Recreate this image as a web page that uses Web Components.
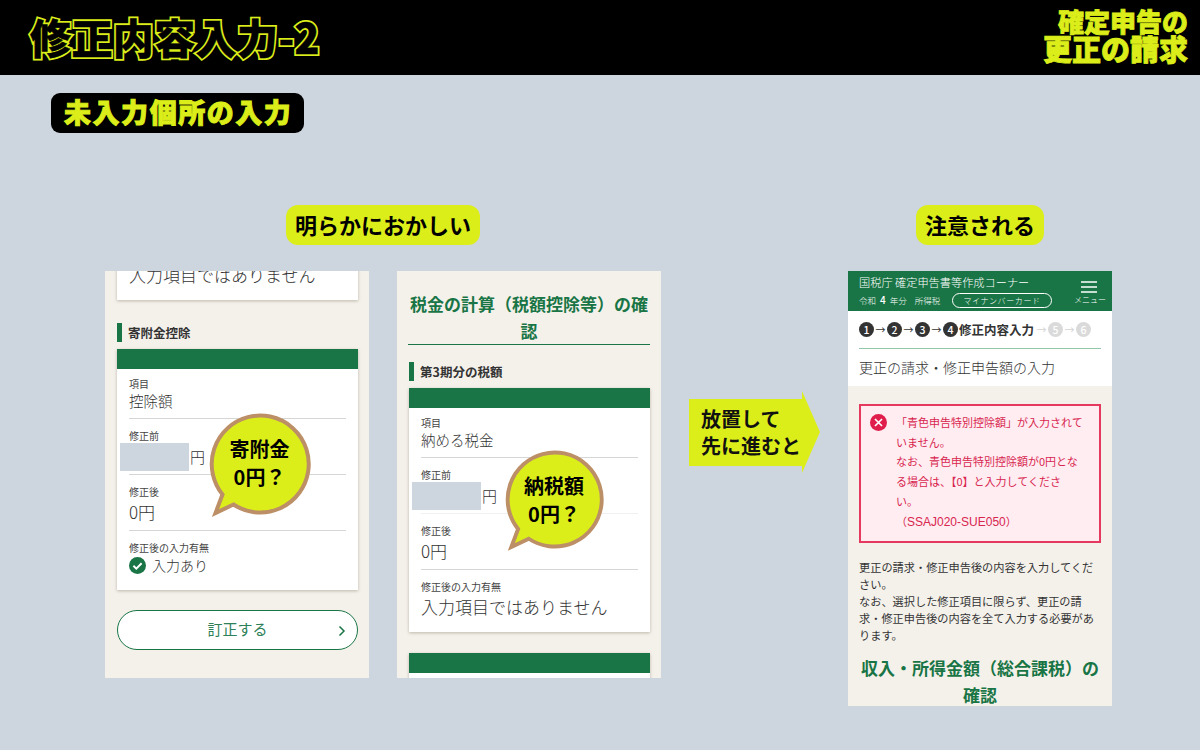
<!DOCTYPE html>
<html lang="ja">
<head>
<meta charset="utf-8">
<title>修正内容入力-2</title>
<style>
html, body { margin: 0; height: 750px; overflow: hidden; background: #cdd5df; font-family: "Noto Sans CJK JP", "Noto Sans", sans-serif; }
</style>
</head>
<body>
<slide-header></slide-header>
<slide-tag>未入力個所の入力</slide-tag>
<slide-main>
  <slide-group label="明らかにおかしい">
    <phone-frame>
      <form-card class="top" style="margin-top:-19px">
        <card-row nohead soft>入力項目ではありません</card-row>
      </form-card>
      <sec-head style="margin-top:23px">寄附金控除</sec-head>
      <form-card>
        <card-row first label="項目">控除額</card-row>
        <card-row label="修正前"><masked-value></masked-value></card-row>
        <card-row label="修正後" big>0円</card-row>
        <card-row label="修正後の入力有無" tail><check-value>入力あり</check-value></card-row>
      </form-card>
      <fix-button>訂正する</fix-button>
      <speech-bubble slot="over" style="left:104px;top:142px">寄附金<br>0円？</speech-bubble>
    </phone-frame>
    <phone-frame>
      <page-title underline>税金の計算（税額控除等）の確<br>認</page-title>
      <sec-head style="margin-top:17px">第3期分の税額</sec-head>
      <form-card>
        <card-row first label="項目">納める税金</card-row>
        <card-row label="修正前" soft><masked-value></masked-value></card-row>
        <card-row label="修正後" big>0円</card-row>
        <card-row label="修正後の入力有無" soft big last>入力項目ではありません</card-row>
      </form-card>
      <form-card style="margin-top:21px;height:60px"></form-card>
      <speech-bubble slot="over" small style="left:108px;top:179px">納税額<br>0円？</speech-bubble>
    </phone-frame>
  </slide-group>
  <next-arrow>放置して<br>先に進むと</next-arrow>
  <slide-group label="注意される">
    <phone-frame tall>
      <tax-appbar></tax-appbar>
      <step-head></step-head>
      <error-box>「青色申告特別控除額」が入力されて<br>いません。<br>なお、青色申告特別控除額が0円とな<br>る場合は、【0】と入力してくださ<br>い。<br>（<span style="font-family:'Liberation Sans',sans-serif;font-size:12px">SSAJ020-SUE050</span>）</error-box>
      <lead-text>更正の請求・修正申告後の内容を入力してくだ<br>さい。<br>なお、選択した修正項目に限らず、更正の請<br>求・修正申告後の内容を全て入力する必要があ<br>ります。</lead-text>
      <page-title>収入・所得金額（総合課税）の<br>確認</page-title>
    </phone-frame>
  </slide-group>
</slide-main>

<script>
class Part extends HTMLElement {
    connectedCallback() {
        if (!this.shadowRoot) {
            this.attachShadow({ mode: 'open' }).innerHTML = this.render();
        }
    }
}

const LIME = '#dcee1a';
const GREEN = '#197545';

class SlideHeader extends Part {
    render() {
        return `
            <style>
                :host { display: flex; justify-content: space-between; align-items: center; height: 75px; background: #000; padding: 0 12px 0 30px; box-sizing: border-box; }
                .title { position: relative; font-size: 41px; font-weight: 900; line-height: 1; color: ${LIME}; -webkit-text-stroke: 4px ${LIME}; margin-top: -2px; white-space: nowrap; letter-spacing: .4px; }
                .title::after { content: attr(data-text); position: absolute; left: 0; top: 0; color: #000; -webkit-text-stroke: .5px #000; }
                .logo { color: ${LIME}; font-weight: 900; text-align: right; -webkit-text-stroke: .8px ${LIME}; margin-top: -7px; }
                .logo div:first-child { font-size: 26px; line-height: 28px; }
                .logo div:last-child { font-size: 29px; line-height: 27px; }
            </style>
            <div class="title" data-text="修正内容入力-2">修正内容入力-2</div>
            <div class="logo"><div>確定申告の</div><div>更正の請求</div></div>
        `;
    }
}

class SlideTag extends Part {
    render() {
        return `
            <style>
                :host { display: block; width: fit-content; margin: 18px 0 0 51px; height: 40px; line-height: 38px; padding: 0 12px 0 13px; box-sizing: border-box; background: #000; border-radius: 9px; color: ${LIME}; font-size: 27px; font-weight: 900; letter-spacing: 1.55px; -webkit-text-stroke: .9px ${LIME}; white-space: nowrap; }
            </style>
            <slot></slot>
        `;
    }
}

class SlideMain extends Part {
    render() {
        return `
            <style>
                :host { display: flex; align-items: flex-start; gap: 28px; margin: 72px 0 0 105px; }
            </style>
            <slot></slot>
        `;
    }
}

class SlideGroup extends Part {
    render() {
        return `
            <style>
                :host { display: flex; flex-direction: column; align-items: center; gap: 26px; }
                .pill { height: 40px; line-height: 39px; padding: 0 9px; background: ${LIME}; border-radius: 12px; font-size: 22px; font-weight: 700; color: #000; white-space: nowrap; }
                .row { display: flex; gap: 28px; }
            </style>
            <div class="pill">${this.getAttribute('label')}</div>
            <div class="row"><slot></slot></div>
        `;
    }
}

class PhoneFrame extends Part {
    render() {
        const height = this.hasAttribute('tall') ? 435 : 407;
        return `
            <style>
                :host { display: block; position: relative; width: 264px; height: ${height}px; background: #f4f1eb; overflow: hidden; color: #333; }
            </style>
            <slot></slot>
            <slot name="over"></slot>
        `;
    }
}

class FormCard extends Part {
    render() {
        return `
            <style>
                :host { display: block; margin: 0 11px 0 12px; background: #fff; box-shadow: 0 1px 3px rgba(90,80,50,.35); }
                .bar { height: 20px; background: ${GREEN}; }
                .body { padding: 0 12.500px 0 12px; }
                :host(.top) .bar { display: none; }
            </style>
            <div class="bar"></div>
            <div class="body"><slot></slot></div>
        `;
    }
}

class CardRow extends Part {
    render() {
        const first = this.hasAttribute('first');
        const line = this.hasAttribute('soft') ? '#f0f0f0' : '#d6d6d6';
        const label = this.getAttribute('label');
        let bottom = 5;
        if (first) bottom = 7;
        if (this.hasAttribute('nohead') || this.hasAttribute('last')) bottom = 12;
        if (this.hasAttribute('tail')) bottom = 15;
        return `
            <style>
                :host { display: block; padding: ${first ? 8 : 10}px 0 ${bottom}px; font-weight: 300; }
                :host(:not(:last-child)) { border-bottom: 1px solid ${line}; }
                .label { font-size: 10px; line-height: 14px; color: #444; font-weight: 400; }
                .value { font-size: ${this.hasAttribute('big') ? 17 : 14.5}px; line-height: ${first ? 20 : 26}px; white-space: nowrap; }
                :host([nohead]) .value { font-size: 17px; line-height: 26px; }
            </style>
            ${label ? `<div class="label">${label}</div>` : ''}
            <div class="value"><slot></slot></div>
        `;
    }
}

class MaskedValue extends Part {
    render() {
        return `
            <style>
                :host { display: flex; align-items: center; margin: 0 0 -2px -9px; height: 28px; font-size: 15px; }
                i { width: 69px; height: 28px; background: #cdd5df; margin-right: 1px; }
            </style>
            <i></i>円
        `;
    }
}

class CheckValue extends Part {
    render() {
        return `
            <style>
                :host { display: flex; align-items: center; gap: 6px; height: 20px; font-size: 14px; }
                svg { width: 17px; height: 17px; }
            </style>
            <svg viewBox="0 0 17 17"><circle cx="8.5" cy="8.5" r="8.5" fill="${GREEN}"/><path d="M4.4 8.8l2.9 2.8 5.3-5.4" fill="none" stroke="#fff" stroke-width="2"/></svg>
            <slot></slot>
        `;
    }
}

class SecHead extends Part {
    render() {
        return `
            <style>
                :host { display: block; margin: 0 11px 7px 12px; height: 19px; border-left: 5px solid ${GREEN}; padding-left: 6px; font-size: 12.5px; font-weight: 700; line-height: 19px; color: #333; }
            </style>
            <slot></slot>
        `;
    }
}

class FixButton extends Part {
    render() {
        return `
            <style>
                :host { display: flex; position: relative; justify-content: center; align-items: center; box-sizing: border-box; margin: 20px 11px 0 12px; height: 40px; padding-bottom: 3px; background: #fff; border: 1.5px solid ${GREEN}; border-radius: 20px; font-size: 15px; color: #2d8058; font-weight: 400; }
                svg { position: absolute; right: 11px; top: 14px; width: 8px; height: 12px; }
            </style>
            <slot></slot>
            <svg viewBox="0 0 8 12"><path d="M1.5 1.5L6 6l-4.500 4.500" fill="none" stroke="${GREEN}" stroke-width="1.500"/></svg>
        `;
    }
}

class PageTitle extends Part {
    render() {
        return `
            <style>
                :host { display: block; margin: 0 11px; padding: 20px 0 0; text-align: center; font-size: 17px; font-weight: 700; line-height: 27px; color: ${GREEN}; white-space: nowrap; }
                :host([underline]) { border-bottom: 1px solid ${GREEN}; padding: 19px 0 0; height: 54px; }
                :host(:last-child) { padding-top: 10px; }
            </style>
            <slot></slot>
        `;
    }
}

class SpeechBubble extends Part {
    render() {
        const scale = this.hasAttribute('small') ? .97 : 1;
        return `
            <style>
                :host { position: absolute; display: block; width: ${104 * scale}px; height: ${108 * scale}px; }
                svg { position: absolute; inset: 0; width: 100%; height: 100%; }
                .t { position: absolute; left: 0; top: 22px; width: ${101 * scale}px; text-align: center; font-size: 20px; font-weight: 700; line-height: 28px; color: #000; }
            </style>
            <svg viewBox="0 0 104 108"><path d="M13.5 81.5A48.500 48.500 0 1 1 24.500 91.500L6.500 100Z" fill="${LIME}" stroke="#bc8f67" stroke-width="4"/></svg>
            <div class="t"><slot></slot></div>
        `;
    }
}

class NextArrow extends Part {
    render() {
        return `
            <style>
                :host { display: block; box-sizing: border-box; width: 131px; height: 82px; margin-top: 186px; padding: 14px 0 0 12px; background: ${LIME}; clip-path: polygon(0 8px, 113px 8px, 113px 0, 131px 41px, 113px 82px, 113px 75px, 0 75px); font-size: 20px; font-weight: 700; line-height: 27px; color: #111; white-space: nowrap; }
            </style>
            <slot></slot>
        `;
    }
}

class TaxAppbar extends Part {
    render() {
        return `
            <style>
                :host { display: block; position: relative; height: 40px; background: ${GREEN}; color: #fff; font-weight: 300; }
                .name { position: absolute; left: 11px; top: 3px; font-size: 11.2px; line-height: 16px; white-space: nowrap; }
                .sub { position: absolute; left: 11px; top: 23px; font-size: 8.5px; line-height: 12px; white-space: nowrap; }
                .sub b { font-size: 10px; font-weight: 500; margin: 0 4px; }
                .sub span { margin-left: 8px; }
                .card { position: absolute; left: 104px; top: 22px; width: 100px; height: 15px; box-sizing: border-box; border: 1px solid #fff; border-radius: 8px; font-size: 8px; line-height: 13px; text-align: center; letter-spacing: .6px; }
                svg { position: absolute; left: 233px; top: 10px; width: 16px; height: 12px; }
                .menu { position: absolute; left: 226px; top: 23px; font-size: 8px; line-height: 12px; white-space: nowrap; }
            </style>
            <div class="name">国税庁 確定申告書等作成コーナー</div>
            <div class="sub">令和<b>4</b>年分<span>所得税</span></div>
            <div class="card">マイナンバーカード</div>
            <svg viewBox="0 0 16 12"><path d="M0 1h16M0 6h16M0 11h16" stroke="#fff" stroke-width="1.500"/></svg>
            <div class="menu">メニュー</div>
        `;
    }
}

class StepHead extends Part {
    render() {
        const dot = (n, off) => `<i class="${off ? 'off' : ''}">${n}</i>`;
        const arrow = (off) => `<u class="${off ? 'off' : ''}">→</u>`;
        return `
            <style>
                :host { display: block; background: #fff; height: 75px; padding: 0 11px; }
                .steps { display: flex; align-items: center; height: 37px; font-size: 12.5px; font-weight: 700; color: #333; white-space: nowrap; border-bottom: 1.500px solid #8fc7a8; }
                i { display: block; width: 15px; height: 15px; border-radius: 50%; background: #333; color: #fff; font-size: 10.5px; font-style: normal; line-height: 15px; text-align: center; font-weight: 500; }
                i.off { background: #dadada; }
                u { text-decoration: none; width: 13px; text-align: center; font-size: 10px; font-weight: 400; }
                u.off { color: #d4d4d4; }
                .now { margin: 0 1px; }
                .sub { font-size: 14px; line-height: 37px; font-weight: 300; color: #333; white-space: nowrap; }
            </style>
            <div class="steps">
                ${dot(1)}${arrow()}${dot(2)}${arrow()}${dot(3)}${arrow()}${dot(4)}
                <span class="now">修正内容入力</span>
                ${arrow(1)}${dot(5, 1)}${arrow(1)}${dot(6, 1)}
            </div>
            <div class="sub">更正の請求・修正申告額の入力</div>
        `;
    }
}

class ErrorBox extends Part {
    render() {
        return `
            <style>
                :host { display: block; position: relative; box-sizing: border-box; margin: 18px 11px 0; height: 139px; border: 2px solid #e6395f; background: #ffedf2; padding: 7px 0 0 35px; font-size: 11px; line-height: 19.700px; color: #d8264f; font-weight: 400; white-space: nowrap; }
                svg { position: absolute; left: 9px; top: 8px; width: 17px; height: 17px; }
            </style>
            <svg viewBox="0 0 17 17"><circle cx="8.500" cy="8.500" r="8.500" fill="#e01e4c"/><path d="M5 5l7 7M12 5l-7 7" stroke="#fff" stroke-width="1.700"/></svg>
            <slot></slot>
        `;
    }
}

class LeadText extends Part {
    render() {
        return `
            <style>
                :host { display: block; margin: 16px 11px 0; font-size: 11.2px; line-height: 17px; color: #333; font-weight: 400; white-space: nowrap; }
            </style>
            <slot></slot>
        `;
    }
}

customElements.define('slide-header', SlideHeader);
customElements.define('slide-tag', SlideTag);
customElements.define('slide-main', SlideMain);
customElements.define('slide-group', SlideGroup);
customElements.define('phone-frame', PhoneFrame);
customElements.define('form-card', FormCard);
customElements.define('card-row', CardRow);
customElements.define('masked-value', MaskedValue);
customElements.define('check-value', CheckValue);
customElements.define('sec-head', SecHead);
customElements.define('fix-button', FixButton);
customElements.define('page-title', PageTitle);
customElements.define('speech-bubble', SpeechBubble);
customElements.define('next-arrow', NextArrow);
customElements.define('tax-appbar', TaxAppbar);
customElements.define('step-head', StepHead);
customElements.define('error-box', ErrorBox);
customElements.define('lead-text', LeadText);
</script>
</body>
</html>
